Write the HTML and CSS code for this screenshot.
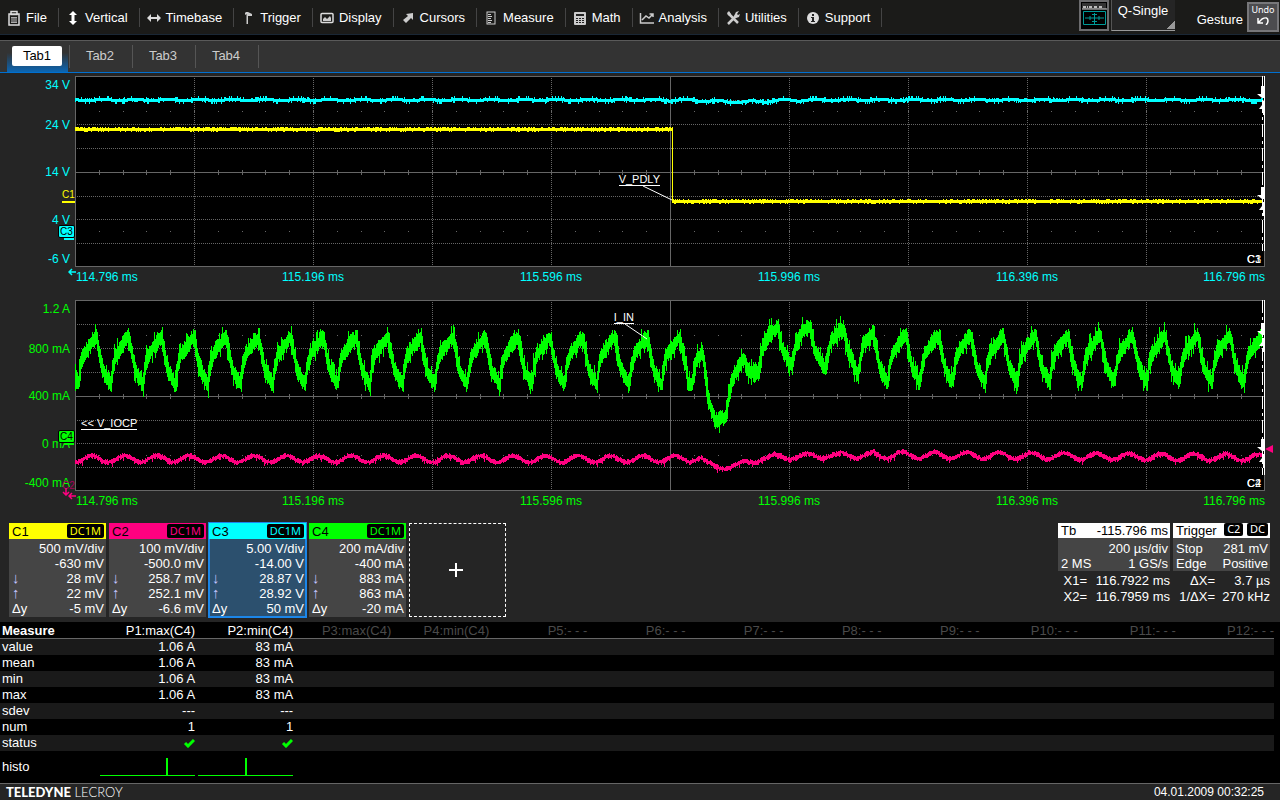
FILE: index.html
```html
<!DOCTYPE html>
<html lang="en">
  <head>
    <meta charset="UTF-8" />
    <meta name="viewport" content="width=device-width, initial-scale=1.0" />
    <title>Oscilloscope</title>
    <link rel="stylesheet" href="styles.css">
  </head>
  <body>
    <header class="menubar">
      <nav class="menu">
        <button type="button"><svg viewBox="0 0 16 16"><path d="M3 4h10v11H3z M5 1.500h6v3H5z" fill="none" stroke="#ddd" stroke-width="1.500"/><path d="M5 7h6v6H5z" fill="#aaa"/><path d="M5 9h6M5 11h6" stroke="#333"/></svg>File</button>
        <button type="button"><svg viewBox="0 0 16 16"><path d="M8 1l4 4H9.500v6H12l-4 4-4-4h2.500V5H4z" fill="#fff"/></svg>Vertical</button>
        <button type="button"><svg viewBox="0 0 16 16"><path d="M1 8l4-4v3h6V4l4 4-4 4V9H5v3z" fill="#ddd"/></svg>Timebase</button>
        <button type="button"><svg viewBox="0 0 16 16"><path d="M6 2h2l4 2v2L8 6v8H6.500V4L5 5V3z" fill="#ccc"/></svg>Trigger</button>
        <button type="button"><svg viewBox="0 0 16 16"><rect x="2" y="3.500" width="12" height="9" rx="1" fill="none" stroke="#ddd" stroke-width="1.500"/><path d="M4 11V9l2-2 2 2 3-3 1 2v3z" fill="#ccc"/></svg>Display</button>
        <button type="button"><svg viewBox="0 0 16 16"><path d="M13 3v7l-2-2-5 5-3-3 5-4-2-2z" fill="#ccc"/></svg>Cursors</button>
        <button type="button"><svg viewBox="0 0 16 16"><rect x="4" y="2" width="8" height="12" fill="none" stroke="#ccc"/><path d="M5 4.500h3M5 6.500h4M5 8.500h3M5 10.500h4M5 12.500h3" stroke="#ccc"/></svg>Measure</button>
        <button type="button"><svg viewBox="0 0 16 16"><rect x="2" y="2" width="12" height="13" rx="1" fill="#ccc"/><path d="M4 4h8v2H4zM4 8h2v1H4zM7 8h2v1H7zM10 8h2v1h-2zM4 10h2v1H4zM7 10h2v1H7zM10 10h2v1h-2zM4 12h2v1H4zM7 12h2v1H7zM10 12h2v1h-2z" fill="#222"/></svg>Math</button>
        <button type="button"><svg viewBox="0 0 16 16"><path d="M1.500 3v10H15M3 10l4-4 3 2 4-4M10.500 4H14v3" fill="none" stroke="#ccc" stroke-width="1.500"/></svg>Analysis</button>
        <button type="button"><svg viewBox="0 0 16 16"><path d="M3 14L12 5M3 3l10 10" stroke="#ccc" stroke-width="2.500"/><path d="M2 3l2-2 2 3-2 2zM9 6l2-4 3-1-2 3 1 1 2-1-1 3-3 1z" fill="#ccc"/></svg>Utilities</button>
        <button type="button"><svg viewBox="0 0 16 16"><circle cx="8" cy="8" r="6" fill="#ddd"/><path d="M7 4h2v2H7zM6 7h3v4h1v1H6v-1h1V8H6z" fill="#222"/></svg>Support</button>
      </nav>
      <div class="tools">
        <button type="button" class="display-btn" aria-label="Trigger display">
          <svg viewBox="0 0 30 31"><rect x="1" y="1" width="28" height="29" fill="#000" stroke="#6c6c6e" stroke-width="2"/><path d="M3 3h24v6H3z" fill="#333"/><path d="M3 9h25" stroke="#ddd"/><path d="M4 7h5M10 7h4M15 7h4M20 7h3" stroke="#bbb" stroke-width="2" stroke-dasharray="3 1"/><path d="M4.500 11.500h22v13h-22zM6 18h19M15.500 13v11M11 16v4M20 16v4M13 14.500h5M13 21.500h5" fill="none" stroke="#009a98"/></svg>
        </button>
        <select class="mode" aria-label="Trigger mode"><option>Q-Single</option></select>
        <span class="gesture">Gesture</span>
        <button type="button" class="undo">Undo
          <svg viewBox="0 0 12 8"><path d="M1 1v5h5M1 6l4-4q6-3 6 2 0 2-2 4" fill="none" stroke="#fff" stroke-width="1.500"/></svg>
        </button>
      </div>
    </header>

    <nav class="tabs">
      <button type="button" class="tab active"><span>Tab1</span></button>
      <button type="button" class="tab"><span>Tab2</span></button>
      <button type="button" class="tab"><span>Tab3</span></button>
      <button type="button" class="tab"><span>Tab4</span></button>
    </nav>

    <main class="graphs">
      <section class="graph volts">
        <div class="y-axis">
          <span>34 V</span><span>24 V</span><span>14 V</span><span>4 V</span><span>-6 V</span>
          <b class="marker c1-marker">C1</b>
          <b class="marker badge c3-marker">C3</b>
          <svg class="offscreen" viewBox="0 0 8 8"><path d="M8 4H1M4 1L1 4l3 3" fill="none" stroke="#0ff" stroke-width="1.500"/></svg>
        </div>
        <div class="plot">
          <svg id="voltPlot" viewBox="0 0 1190 191" preserveAspectRatio="none"></svg>
          <span class="note v-pdly">V_PDLY</span>
          <span class="corner"><i>C1</i><i>C3</i></span>
        </div>
        <div class="x-axis">
          <span>114.796 ms</span><span>115.196 ms</span><span>115.596 ms</span><span>115.996 ms</span><span>116.396 ms</span><span>116.796 ms</span>
        </div>
      </section>

      <section class="graph amps">
        <div class="y-axis">
          <span>1.2 A</span><span>800 mA</span><span>400 mA</span><span>0 mA</span><span>-400 mA</span>
          <b class="marker badge c4-marker">C4</b>
          <b class="marker c2-marker">C2</b>
          <svg class="offscreen" viewBox="0 0 8 8"><path d="M8 4H1M4 1L1 4l3 3" fill="none" stroke="#ff0080" stroke-width="1.500"/></svg>
          <svg class="offscreen below" viewBox="0 0 8 8"><path d="M4 0v7M1 4l3 3 3-3" fill="none" stroke="#ff0080" stroke-width="1.500"/></svg>
        </div>
        <div class="plot">
          <svg id="ampPlot" viewBox="0 0 1190 191" preserveAspectRatio="none"></svg>
          <span class="note v-iocp">&lt;&lt; V_IOCP</span>
          <span class="note i-in">I_IN</span>
          <span class="corner"><i>C4</i><i>C2</i></span>
          <span class="level"></span>
        </div>
        <div class="x-axis">
          <span>114.796 ms</span><span>115.196 ms</span><span>115.596 ms</span><span>115.996 ms</span><span>116.396 ms</span><span>116.796 ms</span>
        </div>
      </section>
    </main>

    <section class="descriptors">
      <div class="channel c1">
        <h2>C1 <small>DC1M</small></h2>
        <p><span></span>500 mV/div</p>
        <p><span></span>-630 mV</p>
        <p><span class="arrow">↓</span>28 mV</p>
        <p><span class="arrow">↑</span>22 mV</p>
        <p><span>Δy</span>-5 mV</p>
      </div>
      <div class="channel c2">
        <h2>C2 <small>DC1M</small></h2>
        <p><span></span>100 mV/div</p>
        <p><span></span>-500.0 mV</p>
        <p><span class="arrow">↓</span>258.7 mV</p>
        <p><span class="arrow">↑</span>252.1 mV</p>
        <p><span>Δy</span>-6.6 mV</p>
      </div>
      <div class="channel c3 selected">
        <h2>C3 <small>DC1M</small></h2>
        <p><span></span>5.00 V/div</p>
        <p><span></span>-14.00 V</p>
        <p><span class="arrow">↓</span>28.87 V</p>
        <p><span class="arrow">↑</span>28.92 V</p>
        <p><span>Δy</span>50 mV</p>
      </div>
      <div class="channel c4">
        <h2>C4 <small>DC1M</small></h2>
        <p><span></span>200 mA/div</p>
        <p><span></span>-400 mA</p>
        <p><span class="arrow">↓</span>883 mA</p>
        <p><span class="arrow">↑</span>863 mA</p>
        <p><span>Δy</span>-20 mA</p>
      </div>
      <button type="button" class="add" aria-label="Add channel"><svg viewBox="0 0 14 14"><path d="M7 0v14M0 7h14" stroke="#fff" stroke-width="2"/></svg></button>

      <div class="acquisition">
        <div class="info">
          <h2>Tb <span>-115.796 ms</span></h2>
          <p><span></span>200 µs/div</p>
          <p><span>2 MS</span>1 GS/s</p>
        </div>
        <div class="info">
          <h2>Trigger <span><small>C2</small> <small>DC</small></span></h2>
          <p><span>Stop</span>281 mV</p>
          <p><span>Edge</span>Positive</p>
        </div>
        <div class="readout">
          <span>X1=</span><span>116.7922 ms</span>
          <span>X2=</span><span>116.7959 ms</span>
        </div>
        <div class="readout delta">
          <span>ΔX=</span><span>3.7 µs</span>
          <span>1/ΔX=</span><span>270 kHz</span>
        </div>
      </div>
    </section>

    <section class="measure">
      <table>
        <thead>
          <tr>
            <th class="name">Measure</th><th class="on">P1:max(C4)</th><th class="on">P2:min(C4)</th>
            <th>P3:max(C4)</th><th>P4:min(C4)</th><th>P5:- - -</th><th>P6:- - -</th><th>P7:- - -</th>
            <th>P8:- - -</th><th>P9:- - -</th><th>P10:- - -</th><th>P11:- - -</th><th>P12:- - -</th>
          </tr>
        </thead>
        <tbody>
          <tr><th>value</th><td>1.06 A</td><td>83 mA</td><td colspan="10"></td></tr>
          <tr><th>mean</th><td>1.06 A</td><td>83 mA</td><td colspan="10"></td></tr>
          <tr><th>min</th><td>1.06 A</td><td>83 mA</td><td colspan="10"></td></tr>
          <tr><th>max</th><td>1.06 A</td><td>83 mA</td><td colspan="10"></td></tr>
          <tr><th>sdev</th><td>---</td><td>---</td><td colspan="10"></td></tr>
          <tr><th>num</th><td>1</td><td>1</td><td colspan="10"></td></tr>
          <tr>
            <th>status</th>
            <td><svg class="ok" viewBox="0 0 12 10"><path d="M2 5l3 3 6-6" fill="none" stroke="#0f0" stroke-width="3"/></svg></td>
            <td><svg class="ok" viewBox="0 0 12 10"><path d="M2 5l3 3 6-6" fill="none" stroke="#0f0" stroke-width="3"/></svg></td>
            <td colspan="10"></td>
          </tr>
          <tr class="histo">
            <th>histo</th>
            <td><svg viewBox="0 0 95 20" preserveAspectRatio="none"><path d="M0 18.500h95" stroke="#0f0"/><path d="M67 1v17" stroke="#0f0" stroke-width="2"/></svg></td>
            <td><svg viewBox="0 0 95 20" preserveAspectRatio="none"><path d="M0 18.500h95" stroke="#0f0"/><path d="M48 1v17" stroke="#0f0" stroke-width="2"/></svg></td>
            <td colspan="10"></td>
          </tr>
        </tbody>
      </table>
    </section>

    <footer>
      <div class="brand"><b>TELEDYNE</b> LECROY</div>
      <time>04.01.2009 00:32:25</time>
    </footer>

    <script src="scope.js"></script>
  </body>
</html>
```
FILE: styles.css
```css
* {
  box-sizing: border-box;
  margin: 0;
  padding: 0;
}

body {
  display: flex;
  flex-direction: column;
  min-height: 100vh;
  font-family: "Liberation Sans", Arial, sans-serif;
  font-size: 13px;
  line-height: 16px;
  color: #fff;
  background-color: #252525;
}

button,
select {
  font: inherit;
  color: inherit;
  background: none;
  border: none;
  cursor: pointer;
}

svg {
  display: block;
}

h2 {
  font-size: 13px;
  font-weight: normal;
}

/* menu */
.menubar {
  display: flex;
  justify-content: space-between;
  height: 35px;
  background-color: #1b1b19;
  border-bottom: 1px solid #1a2735;
}

.menu {
  display: flex;
  align-items: flex-start;
  padding-top: 8px;
}

.menu button {
  display: flex;
  align-items: center;
  gap: 4px;
  height: 19px;
  padding: 0 11px 0 6px;
  border-right: 1px solid #444;
  white-space: nowrap;
}

.menu svg {
  width: 16px;
  height: 16px;
}

.tools {
  display: flex;
  align-items: flex-start;
}

.display-btn svg {
  width: 30px;
  height: 31px;
}

.mode {
  width: 64px;
  height: 31px;
  margin: 0 22px 0 2px;
  padding: 0 0 8px 6px;
  appearance: none;
  background: linear-gradient(135deg, transparent 50%, #999 50%) right 0 bottom 1px / 8px 8px no-repeat #252525;
  border-bottom: 1px solid #999;
  border-left: 1px solid #555;
}

.gesture {
  margin: 12px 4px 0 0;
}

.undo {
  display: flex;
  flex-direction: column;
  align-items: center;
  gap: 1px;
  width: 32px;
  height: 30px;
  margin: 2px 1px 0 0;
  font-family: "Noto Sans", sans-serif;
  font-size: 9px;
  line-height: 12px;
  background-color: #4c4c4f;
  border: 2px solid #77777a;
}

.undo svg {
  width: 12px;
  height: 8px;
}

/* tabs */
.tabs {
  display: flex;
  height: 38px;
  padding-left: 7px;
  border-top: 5px solid #000;
  border-bottom: 1px solid #0070d0;
  background-color: #333;
  box-shadow: inset 0 1px #5a5a5a;
}

.tab {
  display: flex;
  align-items: flex-start;
  justify-content: center;
  width: 63px;
  padding: 6px 3px 0 0;
  color: #ccc;
  background: linear-gradient(#555, #555) right 0 top 5px / 1px 23px no-repeat;
}

.tab span {
  height: 20px;
  line-height: 20px;
}

.tab.active {
  color: #000;
  background: linear-gradient(#555, #555) right 0 top 5px / 1px 23px no-repeat,
    linear-gradient(transparent 40%, #0b66b4) 0 0 / 61px 100% no-repeat;
}

.tab.active span {
  width: 50px;
  border-radius: 2px;
  background-color: #fff;
}

/* graphs */
.graphs {
  flex: 1;
  display: flex;
  flex-direction: column;
  gap: 15px;
  padding: 3px 15px 14px 0;
}

.graph {
  flex: 1;
  display: grid;
  grid-template-columns: 75px 1fr;
  grid-template-rows: 1fr 18px;
  font-size: 12px;
}

.volts {
  color: #0ff;
}

.amps {
  color: #0f0;
}

.y-axis {
  position: relative;
  display: grid;
  grid-template-rows: 1fr 2fr 2fr 2fr 1fr;
  align-items: center;
  padding: 1px 5px 0 0;
  text-align: right;
}

.y-axis span:first-of-type {
  align-self: start;
}

.y-axis span:last-of-type {
  align-self: end;
}

.marker {
  position: absolute;
  right: 0;
  width: 13px;
  height: 14px;
  font-size: 10px;
  font-weight: normal;
  line-height: 12px;
  text-align: left;
}

.c1-marker {
  top: 59%;
  color: #ff0;
  border-bottom: 2px solid #ff0;
}

.badge {
  width: 17px;
  padding-left: 1px;
  height: 13px;
  color: #000;
  border: 1px solid #000;
  border-radius: 2px;
}

.badge::after {
  content: "";
  position: absolute;
  right: 0;
  bottom: -3px;
  width: 10px;
  height: 2px;
  background-color: currentColor;
}

.c3-marker {
  top: 78%;
  background-color: #0ff;
}

.c3-marker::after {
  background-color: #0ff;
}

.c4-marker {
  top: 68%;
  background-color: #0f0;
}

.c4-marker::after {
  background-color: #0f0;
}

.c2-marker {
  top: 94%;
  color: #a8005a;
}

.offscreen {
  position: absolute;
  right: -1px;
  bottom: -9px;
  width: 8px;
  height: 8px;
}

.offscreen.below {
  right: 5px;
  bottom: -5px;
}

.plot {
  position: relative;
  background-color: #000;
}

.plot > svg {
  position: absolute;
  width: 100%;
  height: 100%;
}

.x-axis {
  grid-column: 2;
  display: grid;
  grid-template-columns: 1fr 2fr 2fr 2fr 2fr 1fr;
  padding-top: 2px;
  text-align: center;
  white-space: nowrap;
}

.x-axis span:first-child {
  padding-left: 1px;
  text-align: left;
}

.x-axis span:last-child {
  text-align: right;
}

.note {
  position: absolute;
  font-size: 11px;
  line-height: 12px;
  color: #fff;
  border-bottom: 1px solid #fff;
}

.v-pdly {
  top: 51%;
  right: calc(50% + 10px);
}

.i-in {
  top: 6%;
  right: calc(50% + 36px);
}

.v-iocp {
  top: 61%;
  left: 6px;
}

.corner {
  position: absolute;
  right: 4px;
  bottom: 1px;
  display: grid;
  font-size: 11px;
  line-height: 14px;
  color: #fff;
}

.corner i {
  grid-area: 1 / 1;
  font-style: normal;
}

.level {
  position: absolute;
  top: 76%;
  right: -8px;
  border: 4px solid transparent;
  border-right: 8px solid #ff0080;
  border-left: none;
}

.grid {
  fill: none;
  stroke: #666;
  shape-rendering: crispEdges;
}

.dotted {
  stroke-dasharray: 1 1;
}

.trace {
  fill: none;
  shape-rendering: crispEdges;
}

.trace.yellow {
  stroke: #ff0;
}

.trace.cyan {
  stroke: #0ff;
}

.trace.green {
  stroke: #0f0;
}

.trace.pink {
  stroke: #ff0080;
}

.cursor {
  fill: none;
  stroke: #fff;
  shape-rendering: crispEdges;
}

.cursor.dashed {
  stroke-dasharray: 13 4 3 4;
}

.cursor-arrow {
  fill: #fff;
}

.leader {
  stroke: #fff;
}

/* descriptor boxes */
.descriptors {
  display: flex;
  gap: 3px;
  height: 99px;
  padding: 0 10px 5px 9px;
}

.channel {
  width: 97px;
  background-color: #454545;
}

.channel h2 {
  display: flex;
  justify-content: space-between;
  height: 16px;
  margin-bottom: 2px;
  padding: 1px 2px 1px 3px;
  color: #000;
}

small {
  padding: 0 3px;
  border-radius: 2px;
  font-family: "Noto Sans", sans-serif;
  font-size: 11px;
  line-height: 14px;
  background-color: #000;
}

.channel p,
.info p {
  display: flex;
  justify-content: space-between;
  height: 15px;
  padding: 0 2px 0 3px;
  line-height: 15px;
}

.arrow {
  font-family: "Liberation Serif", serif;
  font-size: 15px;
  color: #c4c4ff;
}

.c1 h2 {
  background-color: #ff0;
}

.c1 small {
  color: #ff0;
}

.c2 h2 {
  background-color: #ff0080;
}

.c2 small {
  color: #ff0080;
}

.c3 h2 {
  background-color: #0ff;
}

.c3 small {
  color: #0ff;
}

.c4 h2 {
  background-color: #0f0;
}

.c4 small {
  color: #0f0;
}

.selected {
  background-color: #2c506e;
  outline: 1px solid #1c86e8;
  box-shadow: inset 0 0 0 1px #1c86e8;
}

.add {
  display: flex;
  align-items: center;
  justify-content: center;
  width: 97px;
  padding-right: 3px;
  border: 1px dashed #fff;
}

.add svg {
  width: 14px;
  height: 14px;
}

.acquisition {
  display: grid;
  grid-template-columns: 112px 97px;
  grid-template-rows: 48px 32px;
  gap: 2px 3px;
  margin-left: auto;
}

.info {
  background-color: #454545;
}

.info h2 {
  display: flex;
  justify-content: space-between;
  height: 15px;
  margin-bottom: 3px;
  padding: 0 2px 0 3px;
  color: #000;
  background-color: #fff;
  white-space: nowrap;
}

.info small {
  display: inline-block;
  height: 13px;
  line-height: 12px;
  color: #fff;
  vertical-align: top;
}

.readout {
  display: grid;
  grid-template-columns: 29px 1fr;
  text-align: right;
  white-space: nowrap;
}

.delta {
  grid-template-columns: 42px 1fr;
}

/* measure table */
.measure {
  padding: 1px 6px 0 0;
  background-color: #000;
}

.measure table {
  width: 100%;
  table-layout: fixed;
  border-collapse: separate;
  border-spacing: 0;
}

.measure th,
.measure td {
  height: 16px;
  line-height: 16px;
  font-weight: normal;
  text-align: right;
  white-space: nowrap;
}

.measure thead th {
  height: 16px;
  padding-top: 1px;
  line-height: 14px;
  color: #4a4a4a;
  border-bottom: 1px solid #666;
}

.measure thead .name {
  width: 97px;
  font-weight: bold;
}

.measure thead .name,
.measure thead .on {
  color: #fff;
}

.measure th:first-child {
  padding-left: 2px;
  text-align: left;
}

.measure tbody tr:nth-child(odd) {
  background-color: #1a1a1a;
}

.ok {
  width: 12px;
  height: 10px;
  margin-left: auto;
}

.measure .histo th,
.measure .histo td {
  height: 32px;
}

.histo svg {
  width: 95px;
  height: 20px;
  margin-left: auto;
  shape-rendering: crispEdges;
}

footer {
  display: flex;
  justify-content: space-between;
  height: 17px;
  padding: 0 16px 0 6px;
  border-top: 1px solid #666;
  font-size: 12px;
}

.brand {
  font-family: Lato, sans-serif;
  font-size: 13px;
  font-weight: 300;
}

.brand b {
  font-weight: 900;
}
```
FILE: scope.js
```js
const W = 1190;
const H = 191;
const PERIOD = 32.4;

// small seeded generator so that the noise is the same on every load
let seed = 7;
function rand() {
  seed = (seed * 16807) % 2147483647;
  return seed / 2147483647;
}

function add(svg, tag, attrs) {
  const el = document.createElementNS('http://www.w3.org/2000/svg', tag);
  for (const key in attrs) el.setAttribute(key, attrs[key]);
  svg.appendChild(el);
}

function drawGrid(svg) {
  let dotted = '';
  let ticks = '';
  for (let i = 1; i < 10; i++) {
    if (i !== 5) dotted += `M${Math.round(i * 119) + 0.5} 0V${H}`;
  }
  for (let i = 1; i < 8; i++) {
    if (i !== 4) dotted += `M0 ${Math.round(i * 23.9) + 0.5}H${W}`;
  }
  for (let i = 1; i < 50; i++) {
    const x = Math.round(i * 23.8);
    ticks += `M${x + 0.5} 94v5M${x} 35.5h1M${x} 155.5h1`;
  }
  add(svg, 'path', { class: 'grid dotted', d: dotted });
  add(svg, 'path', { class: 'grid', d: `M0.5 0.5H${W - 0.5}V${H - 0.5}H0.5ZM595.5 0V${H}M0 96.5H${W}` + ticks });
}

function interpolate(points, x) {
  for (let i = 1; i < points.length; i++) {
    if (x <= points[i][0]) {
      const [x0, y0] = points[i - 1];
      const [x1, y1] = points[i];
      return y0 + (y1 - y0) * (x - x0) / (x1 - x0);
    }
  }
  return points[points.length - 1][1];
}

// one vertical stroke for every sample column
function drawTrace(svg, cls, center, up, down) {
  let d = '';
  for (let x = 0; x < W - 2; x++) {
    const y = center(x);
    const next = center(x + 1);
    const top = Math.round(Math.min(y, next) - up());
    const bottom = Math.round(Math.max(y, next) + down());
    d += `M${x + 0.5} ${top}V${bottom}`;
  }
  add(svg, 'path', { class: 'trace ' + cls, d: d });
}

function drawCursors(svg, levels) {
  add(svg, 'path', { class: 'cursor dashed', d: `M${W - 2.5} 0V175` });
  add(svg, 'path', { class: 'cursor', d: `M${W - 0.5} 0V175` });
  for (const y of levels) {
    add(svg, 'path', {
      class: 'cursor-arrow',
      d: `M1186 ${y - 14}h4v12h-3l-5 -4h4zM1187 ${y + 1}h3v14h-2v-6l-4 0l3 -4z`
    });
  }
}

const cycle = [[0, 38], [3, 56], [6, 70], [11, 80], [14, 85], [16, 66], [19, 55], [25, 46], [30, 39], [33, 38]];
// supply dip after the protection trips
const dip = [
  [611, 66], [613, 84], [617, 84], [621, 62], [627, 52], [629, 60], [633, 98], [640, 120], [651, 117], [653, 102],
  [657, 80], [662, 70], [669, 58], [673, 70], [684, 72], [687, 50], [695, 33], [703, 28], [707, 48], [717, 67],
  [722, 40], [727, 31], [735, 27], [739, 48], [750, 70], [756, 40], [768, 28], [773, 50], [783, 76], [788, 44], [799, 33]
];
const pinkDip = [
  [617, 161], [626, 158], [635, 163], [645, 169], [652, 169], [668, 161], [680, 163], [700, 154], [715, 160],
  [733, 153], [747, 159], [767, 152], [782, 159], [799, 151]
];

function green(x) {
  if (x >= 611 && x <= 799) return interpolate(dip, x);
  const origin = x > 799 ? 799 : 22;
  const phase = (((x - origin) % PERIOD) + PERIOD) % PERIOD;
  return interpolate(cycle, phase) - (x > 799 ? 2 : 0);
}

function pink(x) {
  if (x >= 617 && x <= 799) return interpolate(pinkDip, x);
  const base = x > 799 ? 155 + (x - 799) / 150 : 159;
  return base - 3.3 * Math.cos(2 * Math.PI * (x - 17) / PERIOD);
}

function cyan(x) {
  const sag = 2 * Math.exp(-Math.pow((x - 665) / 35, 2));
  return 24 + sag - Math.sin(2 * Math.PI * (x - 20) / PERIOD);
}

function yellow(x) {
  return x < 598 ? 53 : 125;
}

const volt = document.querySelector('#voltPlot');
drawGrid(volt);
drawTrace(volt, 'cyan', cyan, () => (rand() > 0.8 ? 3 : 1.5), () => (rand() > 0.8 ? 3 : 1.5));
drawTrace(volt, 'yellow', yellow, () => (rand() > 0.6 ? 2 : 1), () => (rand() > 0.8 ? 3 : 2));
add(volt, 'path', { class: 'leader', d: 'M568 110L597 124' });
drawCursors(volt, [24, 125]);

const amp = document.querySelector('#ampPlot');
drawGrid(amp);
drawTrace(amp, 'green', green, () => 4 + rand() * (rand() > 0.7 ? 11 : 5), () => 4 + rand() * (rand() > 0.7 ? 10 : 5));
drawTrace(amp, 'pink', pink, () => 1 + rand() * 2, () => 1 + rand() * (rand() > 0.9 ? 5 : 2));
add(amp, 'path', { class: 'leader', d: 'M550 24L572 39' });
drawCursors(amp, [37, 153]);
```
